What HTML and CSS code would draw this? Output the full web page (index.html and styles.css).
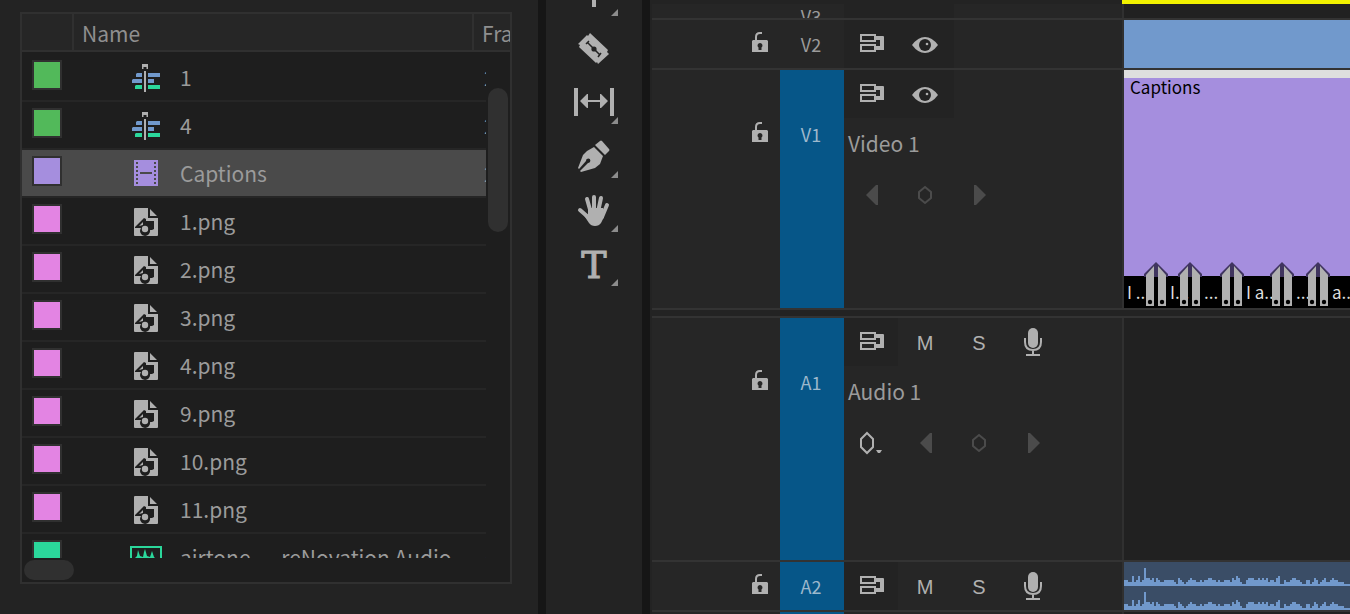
FILE: index.html
```html
<!DOCTYPE html>
<html lang="en">
<head>
    <meta charset="UTF-8">
    <meta name="viewport" content="width=device-width, initial-scale=1.0">
    <title>Video Editor</title>
    <link rel="stylesheet" href="styles.css">
</head>
<body>
    <!-- shared icons -->
    <svg class="defs" aria-hidden="true">
        <symbol id="sequence" viewBox="0 0 32 30">
            <path fill="#b0b0b0" d="M12 1h6v5h-1.500V4h-3v2H12zM14 8h2v21h-2z"/>
            <path fill="#7199cc" d="M7 10h5v4H6v-3zM18 10h12v4H18zM3 16h9v4H2v-3zM18 16h6v4h-6z"/>
            <path fill="#2bd79b" d="M6 22h6v4H5v-3zM18 22h12v4H18z"/>
        </symbol>
        <symbol id="film" viewBox="0 0 32 30">
            <path fill="#a58ede" d="M4 1h24v26H4z"/>
            <path fill="none" stroke="#4a4a4a" stroke-width="2" stroke-dasharray="2 2" d="M7 3v24M25 3v24"/>
            <path fill="#4a4a4a" d="M10 13h12v2H10z"/>
        </symbol>
        <symbol id="image" viewBox="0 0 32 30">
            <path fill="#b0b0b0" d="M5 1h13v10h10v17q0 1-1 1H5q-1 0-1-1V2q0-1 1-1zM20 2l7 7h-7z"/>
            <path fill="#1e1e1e" d="M14 11l2 1v2h8v8l-2 1h-2a5 5 0 1 1-9-2H5v-1z"/>
            <path fill="#b0b0b0" d="M13 15v3l-4 1z"/>
            <circle cx="15" cy="22" r="3.200" fill="#b0b0b0"/>
        </symbol>
        <symbol id="audio" viewBox="0 0 32 30">
            <path fill="none" stroke="#2bd79b" stroke-width="2" d="M1 4h30v22H1z"/>
            <path fill="#2bd79b" d="M5 15l2-2 1-6 2 6 3 1 1-5 1-3 2 7 3 1 2-6 2 6 2 2v3H5z"/>
        </symbol>
        <symbol id="lock" viewBox="0 0 16 20">
            <path fill="none" stroke="#b0b0b0" stroke-width="2" d="M4 9V5q0-4 4-4h2"/>
            <path fill="#b0b0b0" d="M1 8h14l1 1v11H0V9z"/>
            <path fill="#262626" d="M8 11a2.500 2.500 0 0 1 1.500 4.500V18h-3v-2.500A2.500 2.500 0 0 1 8 11z"/>
        </symbol>
        <symbol id="sync" viewBox="0 0 54 48">
            <path fill="none" stroke="#b0b0b0" stroke-width="2" d="M17 15h14v6H17zM17 25h14v6H17z"/>
            <path fill="#b0b0b0" d="M32 16h7q1 0 1 1v13h-8v-4h4v-6h-4z"/>
        </symbol>
        <symbol id="eye" viewBox="0 0 54 48">
            <path fill="#b0b0b0" d="M14 25q6-8 13-8t13 8q-6 8-13 8t-13-8z"/>
            <circle cx="27" cy="25" r="6" fill="#232323"/>
            <circle cx="29" cy="24" r="1.300" fill="#b0b0b0"/>
        </symbol>
        <symbol id="mic" viewBox="0 0 54 48">
            <rect x="22" y="10" width="10" height="20" rx="5" fill="#b0b0b0"/>
            <path fill="none" stroke="#b0b0b0" stroke-width="2" d="M19 20v4q0 8 8 8t8-8v-4M27 32v4M20 37h14"/>
        </symbol>
        <symbol id="prev" viewBox="0 0 54 50">
            <path fill="#4b4b4b" d="M34 15v20h-2L22 25l10-10z"/>
        </symbol>
        <symbol id="key" viewBox="0 0 54 50">
            <path fill="none" stroke="#4b4b4b" stroke-width="2" d="M27 17l6 5v6l-6 5-6-5v-6z"/>
        </symbol>
        <symbol id="next" viewBox="0 0 54 50">
            <path fill="#4b4b4b" d="M22 15v20h2l10-10-10-10z"/>
        </symbol>
        <symbol id="keymenu" viewBox="0 0 54 50">
            <path fill="none" stroke="#b0b0b0" stroke-width="2" d="M23 15l6 6v8l-6 6-6-6v-8z"/>
            <path fill="#b0b0b0" d="M32 32h6l-2 3h-2z"/>
        </symbol>
        <symbol id="cut" viewBox="0 0 24 46">
            <path fill="#40355f" d="M12 0l12 12v3H0v-3z"/>
            <path fill="#b0b0b0" d="M2 13l8-9v40H2zM22 13l-8-9v40h8z"/>
            <circle cx="6" cy="40" r="2.200" fill="#000"/>
            <circle cx="18" cy="40" r="2.200" fill="#000"/>
        </symbol>
        <symbol id="wave" viewBox="0 0 226 24">
            <path fill="#7199cc" d="M0 24V18H4V20H8V14H10V20H12V18H14V14H16V20H18V18H20V6H22V16H26V18H28V16H30V20H32V16H34V18H36V20H40V18H50V20H52V22H54V16H56V18H58V20H60V22H62V20H64V18H66V16H68V18H72V20H76V18H78V20H80V18H84V16H88V18H92V20H94V18H96V20H100V18H106V20H108V16H110V18H112V14H114V16H116V20H118V22H122V18H124V16H130V18H134V16H136V18H138V16H140V18H142V16H144V20H146V18H150V20H152V16H154V14H156V22H160V18H162V20H166V18H168V16H172V18H176V20H178V22H182V18H186V22H188V20H190V16H192V18H194V22H196V20H198V18H200V16H202V20H206V18H208V16H210V18H214V20H220V22H226V24z"/>
        </symbol>
    </svg>

    <div class="workspace">
        <section class="project">
            <div class="bin">
                <div class="bin-body">
                    <table class="bin-table">
                        <thead>
                            <tr><th class="col-label"></th><th class="col-name">Name</th><th class="col-rate">Frame Rate</th></tr>
                        </thead>
                        <tbody>
                            <tr><td><i class="swatch green"></i></td><td class="name"><svg><use href="#sequence"/></svg>1</td><td class="rate">23.976 fps</td></tr>
                            <tr><td><i class="swatch green"></i></td><td class="name"><svg><use href="#sequence"/></svg>4</td><td class="rate">23.976 fps</td></tr>
                            <tr class="selected"><td><i class="swatch violet"></i></td><td class="name"><svg><use href="#film"/></svg>Captions</td><td class="rate">23.976 fps</td></tr>
                            <tr><td><i class="swatch pink"></i></td><td class="name"><svg><use href="#image"/></svg>1.png</td><td></td></tr>
                            <tr><td><i class="swatch pink"></i></td><td class="name"><svg><use href="#image"/></svg>2.png</td><td></td></tr>
                            <tr><td><i class="swatch pink"></i></td><td class="name"><svg><use href="#image"/></svg>3.png</td><td></td></tr>
                            <tr><td><i class="swatch pink"></i></td><td class="name"><svg><use href="#image"/></svg>4.png</td><td></td></tr>
                            <tr><td><i class="swatch pink"></i></td><td class="name"><svg><use href="#image"/></svg>9.png</td><td></td></tr>
                            <tr><td><i class="swatch pink"></i></td><td class="name"><svg><use href="#image"/></svg>10.png</td><td></td></tr>
                            <tr><td><i class="swatch pink"></i></td><td class="name"><svg><use href="#image"/></svg>11.png</td><td></td></tr>
                            <tr><td><i class="swatch teal"></i></td><td class="name"><svg><use href="#audio"/></svg>airtone_-_reNovation Audio</td><td class="rate">44100 Hz</td></tr>
                        </tbody>
                    </table>
                    <div class="scroll-y"><div class="thumb-y"></div></div>
                </div>
                <div class="scroll-x"><div class="thumb-x"></div></div>
            </div>
        </section>

        <nav class="tools">
            <button type="button" class="tool" aria-label="Ripple edit">
                <svg viewBox="0 0 96 54"><path fill="#b0b0b0" d="M46 12h4v27h-4z"/><path fill="#8c8c8c" d="M72 41v7h-7z"/></svg>
            </button>
            <button type="button" class="tool" aria-label="Razor">
                <svg viewBox="0 0 96 54">
                    <path fill="#b0b0b0" d="M32 22l9-9 1 1 2-3 18 17-1 2 2 2-11 10-1-2-1 1-17-16 1-2z"/>
                    <path fill="none" stroke="#232323" stroke-width="1.500" d="M42 21l12 12M40 22l3-3M52 35l3-4"/>
                    <circle cx="48" cy="27" r="2.600" fill="#232323"/>
                </svg>
            </button>
            <button type="button" class="tool" aria-label="Slip">
                <svg viewBox="0 0 96 54">
                    <path fill="#b0b0b0" d="M28 12h4v28h-4zM64 12h4v28h-4zM34 25l7-7h1v6h12v-6h1l7 7-7 7h-1v-6H42v6h-1z"/>
                    <path fill="#8c8c8c" d="M72 41v7h-7z"/>
                </svg>
            </button>
            <button type="button" class="tool" aria-label="Pen">
                <svg viewBox="0 0 96 54">
                    <path fill="#b0b0b0" d="M54 11q1-1 2 0l7 8q1 1 0 2l-4 4-10-10zM48 17l9 9-3 8-5 4-14 4-1-1 8-8a2.200 2.200 0 1 0-2-2l-7 8-1-1 5-13 4-4z"/>
                    <path fill="#8c8c8c" d="M72 41v7h-7z"/>
                </svg>
            </button>
            <button type="button" class="tool" aria-label="Hand">
                <svg viewBox="0 0 96 54">
                    <path fill="none" stroke="#b0b0b0" stroke-width="4" stroke-linecap="round" d="M34 26l8 7M41 15l4 14M48 13v14M55 14l-3 14M61 21l-5 12"/>
                    <path fill="#b0b0b0" d="M42 24h15l1 9-3 6q-2 3-6 3t-6-3l-6-9 5 1z"/>
                    <path fill="#8c8c8c" d="M72 41v7h-7z"/>
                </svg>
            </button>
            <button type="button" class="tool" aria-label="Type">
                <svg viewBox="0 0 96 54"><text class="type-glyph" x="48" y="40" text-anchor="middle">T</text><path fill="#8c8c8c" d="M72 41v7h-7z"/></svg>
            </button>
        </nav>

        <section class="timeline">
            <div class="work-area"></div>

            <div class="track collapsed">
                <div class="lock-cell"></div>
                <div class="target">V3</div>
                <div class="controls"><div class="buttons"><span class="block wide"></span></div></div>
                <div class="lane"></div>
            </div>

            <div class="track">
                <div class="lock-cell"><button type="button" aria-label="Lock V2"><svg class="lock"><use href="#lock"/></svg></button></div>
                <div class="target">V2</div>
                <div class="controls">
                    <div class="buttons">
                        <span class="block wide">
                            <button type="button" aria-label="Sync lock"><svg><use href="#sync"/></svg></button>
                            <button type="button" aria-label="Track output"><svg><use href="#eye"/></svg></button>
                        </span>
                    </div>
                </div>
                <div class="lane clip-blue"></div>
            </div>

            <div class="track open video">
                <div class="lock-cell"><button type="button" aria-label="Lock V1"><svg class="lock"><use href="#lock"/></svg></button></div>
                <div class="target on">V1</div>
                <div class="controls">
                    <div class="buttons">
                        <span class="block wide">
                            <button type="button" aria-label="Sync lock"><svg><use href="#sync"/></svg></button>
                            <button type="button" aria-label="Track output"><svg><use href="#eye"/></svg></button>
                        </span>
                    </div>
                    <div class="track-name">Video 1</div>
                    <div class="keyframes">
                        <button type="button" aria-label="Previous keyframe"><svg><use href="#prev"/></svg></button>
                        <button type="button" aria-label="Add keyframe"><svg><use href="#key"/></svg></button>
                        <button type="button" aria-label="Next keyframe"><svg><use href="#next"/></svg></button>
                    </div>
                </div>
                <div class="lane nested">
                    <div class="clip-title">Captions</div>
                    <div class="captions">
                        <div class="caption"><span>I ...</span></div>
                        <div class="caption"><svg class="cut"><use href="#cut"/></svg><span>I...</span></div>
                        <div class="caption"><svg class="cut"><use href="#cut"/></svg><span>...</span></div>
                        <div class="caption"><svg class="cut"><use href="#cut"/></svg><span>I a...</span></div>
                        <div class="caption"><svg class="cut"><use href="#cut"/></svg><span>...</span></div>
                        <div class="caption"><svg class="cut"><use href="#cut"/></svg><span>a...</span></div>
                    </div>
                </div>
            </div>

            <div class="splitter"></div>

            <div class="track open audio">
                <div class="lock-cell"><button type="button" aria-label="Lock A1"><svg class="lock"><use href="#lock"/></svg></button></div>
                <div class="target on">A1</div>
                <div class="controls">
                    <div class="buttons">
                        <span class="block"><button type="button" aria-label="Sync lock"><svg><use href="#sync"/></svg></button></span>
                        <button type="button" class="letter">M</button>
                        <button type="button" class="letter">S</button>
                        <button type="button" aria-label="Record"><svg><use href="#mic"/></svg></button>
                    </div>
                    <div class="track-name">Audio 1</div>
                    <div class="keyframes">
                        <button type="button" aria-label="Show keyframes"><svg><use href="#keymenu"/></svg></button>
                        <button type="button" aria-label="Previous keyframe"><svg><use href="#prev"/></svg></button>
                        <button type="button" aria-label="Add keyframe"><svg><use href="#key"/></svg></button>
                        <button type="button" aria-label="Next keyframe"><svg><use href="#next"/></svg></button>
                    </div>
                </div>
                <div class="lane"></div>
            </div>

            <div class="track">
                <div class="lock-cell"><button type="button" aria-label="Lock A2"><svg class="lock"><use href="#lock"/></svg></button></div>
                <div class="target on">A2</div>
                <div class="controls">
                    <div class="buttons">
                        <span class="block"><button type="button" aria-label="Sync lock"><svg><use href="#sync"/></svg></button></span>
                        <button type="button" class="letter">M</button>
                        <button type="button" class="letter">S</button>
                        <button type="button" aria-label="Record"><svg><use href="#mic"/></svg></button>
                    </div>
                </div>
                <div class="lane clip-audio">
                    <svg class="wave"><use href="#wave"/></svg>
                    <svg class="wave"><use href="#wave"/></svg>
                </div>
            </div>

            <div class="track">
                <div class="lock-cell"></div>
                <div class="target on"></div>
                <div class="controls"></div>
                <div class="lane"></div>
            </div>
        </section>
    </div>
</body>
</html>
```

FILE: styles.css
```css
* {
    box-sizing: border-box;
}
body {
    margin: 0;
    background-color: #161616;
    color: #9b9b9b;
    font-family: "Noto Sans CJK SC", "Open Sans", sans-serif;
    font-size: 21px;
}
svg {
    display: block;
}
button {
    padding: 0;
    border: none;
    background: none;
    color: #b0b0b0;
    cursor: pointer;
}
.defs {
    display: none;
}
.workspace {
    display: flex;
    gap: 8px;
    height: 100vh;
    overflow: hidden;
}

/* project panel */
.project {
    display: flex;
    flex: 0 0 538px;
    padding: 12px 26px 30px 20px;
    background-color: #232323;
}
.bin {
    display: flex;
    flex-direction: column;
    flex: 1;
    min-width: 0;
    border: 2px solid #303030;
    background-color: #1e1e1e;
}
.bin-body {
    position: relative;
    flex: 1;
    min-height: 0;
    overflow: hidden;
}
.bin-table {
    width: 100%;
    table-layout: fixed;
    border-collapse: separate;
    border-spacing: 0;
}
.bin-table th {
    height: 38px;
    padding: 2px 0 0 8px;
    border-right: 2px solid #303030;
    border-bottom: 2px solid #303030;
    background-color: #262626;
    color: #8f8f8f;
    font-weight: normal;
    line-height: 34px;
    text-align: left;
    white-space: nowrap;
    overflow: hidden;
}
.bin-table th:last-child {
    border-right: none;
}
.bin-table .col-label {
    width: 52px;
}
.bin-table .col-rate {
    width: 36px;
}
.bin-table td {
    height: 48px;
    padding: 0 0 0 10px;
    border-bottom: 2px solid #262626;
    line-height: 44px;
    white-space: nowrap;
    overflow: hidden;
}
.bin-table tr:first-child td {
    height: 50px;
    padding-top: 2px;
}
.bin-table td.name {
    padding-left: 56px;
}
.name svg {
    float: left;
    width: 32px;
    height: 30px;
    margin: 8px 18px 0 0;
}
.selected td {
    background-color: #4a4a4a;
}
.swatch {
    display: block;
    width: 30px;
    height: 30px;
    margin-bottom: 4px;
    border: 2px solid #303030;
}
.green { background-color: #52b95a; }
.violet { background-color: #a58ede; }
.pink { background-color: #e384e3; }
.teal { background-color: #2bd79b; }
.scroll-y {
    position: absolute;
    top: 38px;
    right: 0;
    bottom: 0;
    width: 24px;
    padding: 36px 2px 0;
    background-color: #1e1e1e;
}
.thumb-y {
    height: 144px;
    border-radius: 10px;
    background-color: #303030;
}
.scroll-x {
    padding: 2px;
}
.thumb-x {
    width: 50px;
    height: 20px;
    border-radius: 10px;
    background-color: #303030;
}

/* tools */
.tools {
    display: flex;
    flex-direction: column;
    justify-content: flex-start;
    flex: 0 0 96px;
    background-color: #232323;
}
.tool {
    height: 54px;
}
.tool:first-child {
    margin-top: -32px;
}
.tool svg {
    width: 96px;
    height: 54px;
}
.type-glyph {
    fill: #b0b0b0;
    stroke: #b0b0b0;
    stroke-width: 1px;
    font-family: "DejaVu Serif", serif;
    font-size: 38px;
}

/* timeline */
.timeline {
    display: flex;
    flex-direction: column;
    flex: 1;
    min-width: 0;
    padding-left: 2px;
    background-color: #232323;
}
.work-area {
    flex: none;
    height: 4px;
    margin-left: 470px;
    background-color: #f2f200;
}
.track {
    display: grid;
    grid-template-columns: 128px 64px 278px 1fr;
    flex: none;
    height: 50px;
    border-bottom: 2px solid #333;
    background-color: #262626;
}
.collapsed {
    align-items: end;
    height: 16px;
    overflow: hidden;
}
.collapsed .controls,
.collapsed .lane {
    height: 14px;
}
.video {
    height: 240px;
}
.audio {
    height: 244px;
}
.splitter {
    flex: none;
    height: 8px;
    border-bottom: 2px solid #333;
}
.lock-cell {
    display: flex;
    justify-content: flex-end;
    align-items: flex-start;
    padding: 12px 12px 0 0;
}
.lock {
    width: 16px;
    height: 20px;
}
.target {
    padding-right: 2px;
    font-size: 18px;
    line-height: 48px;
    text-align: center;
    white-space: nowrap;
}
.collapsed .target {
    height: 14px;
    line-height: 24px;
}
.on {
    background-color: #065688;
    color: #9db8cc;
}
.open .lock-cell {
    padding-top: 52px;
}
.open .target {
    padding-top: 40px;
}
.controls {
    min-width: 0;
}
.buttons,
.keyframes {
    display: flex;
}
.block {
    display: flex;
    height: 48px;
    background-color: #232323;
}
.wide {
    min-width: 110px;
}
.buttons svg {
    width: 54px;
    height: 48px;
}
.keyframes svg {
    width: 54px;
    height: 50px;
}
.letter {
    width: 54px;
    height: 48px;
    padding-top: 2px;
    font-family: "Liberation Sans", Arial, sans-serif;
    font-size: 20px;
}
.track-name {
    padding: 0 0 2px 4px;
    line-height: 50px;
}
.lane {
    min-width: 0;
    border-left: 2px solid #303030;
    background-color: #212121;
    overflow: hidden;
}
.clip-blue {
    background-color: #7199cc;
}
.nested {
    display: flex;
    flex-direction: column;
    background-color: #a58ede;
}
.clip-title {
    flex: 1;
    padding-left: 6px;
    border-top: 8px solid #dedede;
    color: #000;
    font-size: 17px;
    line-height: 18px;
}
.captions {
    display: grid;
    grid-template-columns: 32px 34px 42px 50px 36px 1fr;
    height: 32px;
    background-color: #000;
    color: #ddd;
    font-size: 17px;
    line-height: 32px;
}
.caption {
    position: relative;
    padding-left: 14px;
    white-space: nowrap;
}
.caption:first-child {
    padding-left: 3px;
}
.caption span {
    display: block;
    overflow: hidden;
}
.cut {
    position: absolute;
    left: -12px;
    bottom: 0;
    z-index: 1;
    width: 24px;
    height: 46px;
}
.clip-audio {
    background-color: #3a4d66;
}
.wave {
    width: 226px;
    height: 24px;
}
```
